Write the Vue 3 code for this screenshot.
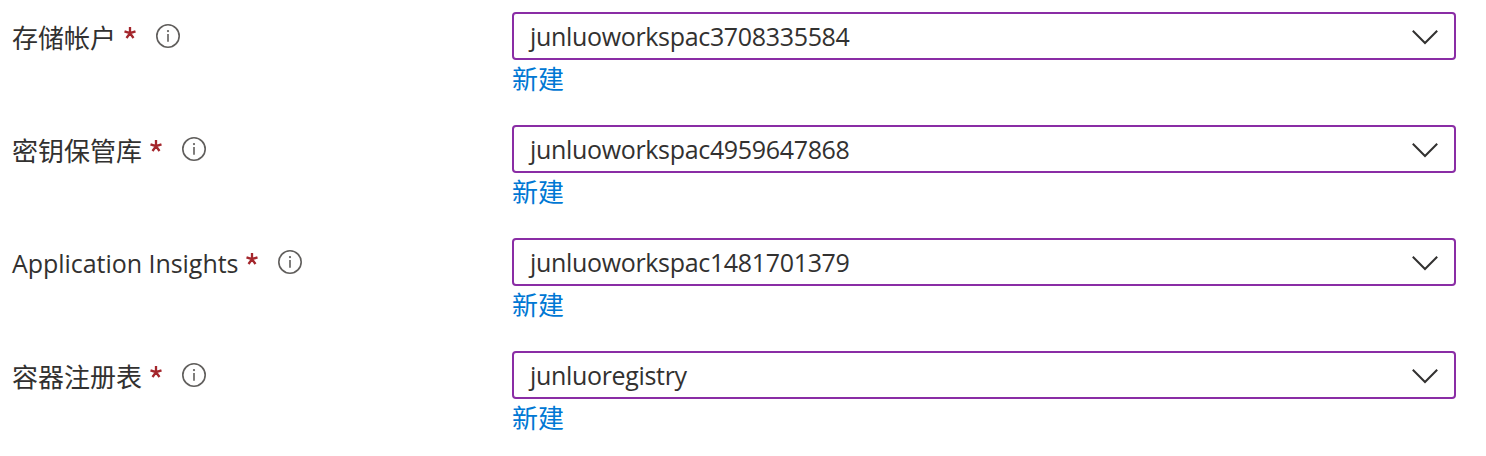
<script setup>
const rows = [
  { label: '存储帐户', value: 'junluoworkspac3708335584', latin: false },
  { label: '密钥保管库', value: 'junluoworkspac4959647868', latin: false },
  { label: 'Application Insights', value: 'junluoworkspac1481701379', latin: true },
  { label: '容器注册表', value: 'junluoregistry', latin: false },
]
</script>

<template>
  <main class="form">
    <div v-for="row in rows" :key="row.label" class="row">
      <div class="label">
        <span class="name" :class="{ latin: row.latin }">{{ row.label }}</span>
        <svg class="star" viewBox="0 0 12 13"><path d="M6 0V6.2M6 6.2L.5 4.3M6 6.2L11.5 4.3M6 6.2L2.5 11M6 6.2L9.5 11" /></svg>
        <svg class="info" viewBox="0 0 26 26"><circle cx="13" cy="13" r="11.2" /><path d="M13 11V18.8" /><circle class="dot" cx="13" cy="8.1" r="1.1" /></svg>
      </div>
      <div class="field">
        <div class="select">
          <span class="value">{{ row.value }}</span>
          <svg class="chevron" viewBox="0 0 28 16"><path d="M1.8 1.8L14 14L26.2 1.8" /></svg>
        </div>
        <a class="link">新建</a>
      </div>
    </div>
  </main>
</template>

<style>
body { margin: 0; background: #fff; }
</style>

<style scoped>
.form { box-sizing: border-box; width: 1486px; height: 456px; padding: 12px 30px 0 12px; overflow: hidden; font-family: "Noto Sans", "Noto Sans CJK SC", sans-serif; font-size: 26px; color: #323130; }
.row { display: flex; height: 113px; }
.label { display: flex; width: 500px; height: 50px; align-items: flex-start; }
.name { line-height: 50px; white-space: nowrap; font-family: "Noto Sans CJK SC", sans-serif; }
.latin { font-family: "Open Sans", "Noto Sans", sans-serif; font-size: 25px; letter-spacing: -0.04px; }
.star { width: 12px; height: 13px; margin: 15px 0 0 8px; fill: none; stroke: #a4262c; stroke-width: 2.3; }
.info { width: 26px; height: 26px; margin: 11px 0 0 19px; fill: none; stroke: #605e5c; stroke-width: 1.6; }
.dot { fill: #605e5c; stroke: none; }
.field { width: 944px; }
.select { box-sizing: border-box; display: flex; align-items: flex-start; justify-content: space-between; height: 48px; padding: 0 15px 0 16px; border: 2px solid #8a2da5; border-radius: 4px; }
.value { font-family: "Open Sans", "Noto Sans", sans-serif; font-size: 25px; line-height: 44px; letter-spacing: -0.33px; }
.chevron { width: 28px; height: 16px; margin-top: 15px; fill: none; stroke: #323130; stroke-width: 2; }
.link { display: block; line-height: 36px; color: #0078d4; font-family: "Noto Sans CJK SC", sans-serif; }
</style>
